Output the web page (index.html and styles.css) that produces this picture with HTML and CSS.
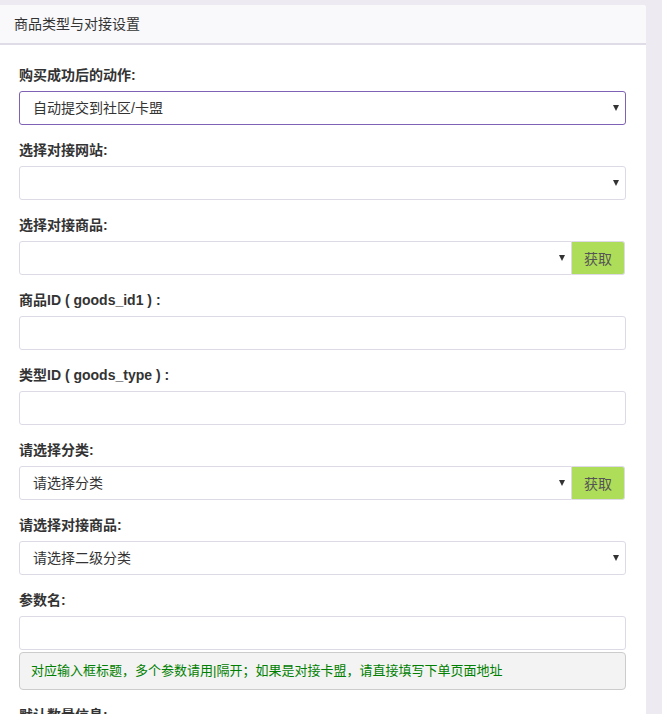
FILE: index.html
```html
<!DOCTYPE html>
<html lang="zh-CN">
<head>
<meta charset="utf-8">
<title>商品类型与对接设置</title>
<link rel="stylesheet" href="styles.css">
</head>
<body>
<div class="panel">
  <div class="panel-heading">商品类型与对接设置</div>
  <div class="panel-body">
    <div class="form-group">
      <label class="label">购买成功后的动作:</label>
      <div class="select-wrap">
        <select class="control select focused"><option>自动提交到社区/卡盟</option></select>
        <span class="caret"></span>
      </div>
    </div>
    <div class="form-group">
      <label class="label">选择对接网站:</label>
      <div class="select-wrap">
        <select class="control select"><option></option></select>
        <span class="caret"></span>
      </div>
    </div>
    <div class="form-group">
      <label class="label">选择对接商品:</label>
      <div class="input-group">
        <div class="select-wrap grow">
          <select class="control select group-left"><option></option></select>
          <span class="caret"></span>
        </div>
        <button class="btn-fetch" type="button">获取</button>
      </div>
    </div>
    <div class="form-group">
      <label class="label">商品ID ( goods_id1 ) :</label>
      <input class="control" type="text">
    </div>
    <div class="form-group">
      <label class="label">类型ID ( goods_type ) :</label>
      <input class="control" type="text">
    </div>
    <div class="form-group">
      <label class="label">请选择分类:</label>
      <div class="input-group">
        <div class="select-wrap grow">
          <select class="control select group-left"><option>请选择分类</option></select>
          <span class="caret"></span>
        </div>
        <button class="btn-fetch" type="button">获取</button>
      </div>
    </div>
    <div class="form-group">
      <label class="label">请选择对接商品:</label>
      <div class="select-wrap">
        <select class="control select"><option>请选择二级分类</option></select>
        <span class="caret"></span>
      </div>
    </div>
    <div class="form-group">
      <label class="label">参数名:</label>
      <input class="control" type="text">
      <div class="help">对应输入框标题，多个参数请用|隔开；如果是对接卡盟，请直接填写下单页面地址</div>
    </div>
    <div class="form-group">
      <label class="label">默认数量信息:</label>
    </div>
  </div>
</div>
</body>
</html>
```

FILE: styles.css
```css
html, body {
  margin: 0;
  padding: 0;
}
body {
  background: #edebf1;
  font-family: "Liberation Sans", "Noto Sans CJK SC", sans-serif;
  color: #333;
  padding-top: 5px;
}
.panel {
  width: 646px;
  background: #fff;
  border-radius: 0 3px 0 0;
  min-height: 760px;
}
.panel-heading {
  height: 38px;
  line-height: 38px;
  background: #f9f9fb;
  border-bottom: 2px solid #dfdce8;
  padding: 0 14px;
  font-size: 14px;
  color: #333;
  border-radius: 0 3px 0 0;
}
.panel-body {
  padding: 20px 20px 0 19px;
}
.form-group {
  margin-bottom: 15px;
}
.label {
  display: block;
  font-weight: bold;
  font-size: 14px;
  line-height: 20px;
  margin-bottom: 6px;
  color: #333;
}
.control {
  display: block;
  width: 100%;
  height: 34px;
  box-sizing: border-box;
  border: 1px solid #dddae6;
  border-radius: 3px;
  padding: 0 12px;
  font-family: "Liberation Sans", "Noto Sans CJK SC", sans-serif;
  font-size: 14px;
  color: #333;
  background: #fff;
  outline: none;
}
.select {
  -webkit-appearance: none;
  appearance: none;
  padding-left: 13px;
}
.focused {
  border-color: #7f62b5;
}
.select-wrap {
  position: relative;
}
.caret {
  position: absolute;
  right: 7px;
  top: 14px;
  width: 0;
  height: 0;
  border-left: 3.5px solid transparent;
  border-right: 3.5px solid transparent;
  border-top: 6px solid #333;
  pointer-events: none;
}
.input-group {
  display: flex;
}
.grow {
  flex: 1;
}
.group-left {
  border-radius: 3px 0 0 3px;
}
.btn-fetch {
  width: 53px;
  height: 34px;
  box-sizing: border-box;
  border: 1px solid #dddae6;
  border-left: none;
  border-radius: 0 3px 3px 0;
  background: #aedd59;
  color: #555;
  font-family: "Liberation Sans", "Noto Sans CJK SC", sans-serif;
  font-size: 14px;
  padding: 0;
  margin-right: 1px;
}
.help {
  margin-top: 2px;
  height: 38px;
  box-sizing: border-box;
  border: 1px solid #cccccc;
  border-radius: 4px;
  background: #f3f3f3;
  padding-left: 11px;
  line-height: 36px;
  font-size: 13px;
  color: #008000;
  margin-bottom: 13px;
}
```
